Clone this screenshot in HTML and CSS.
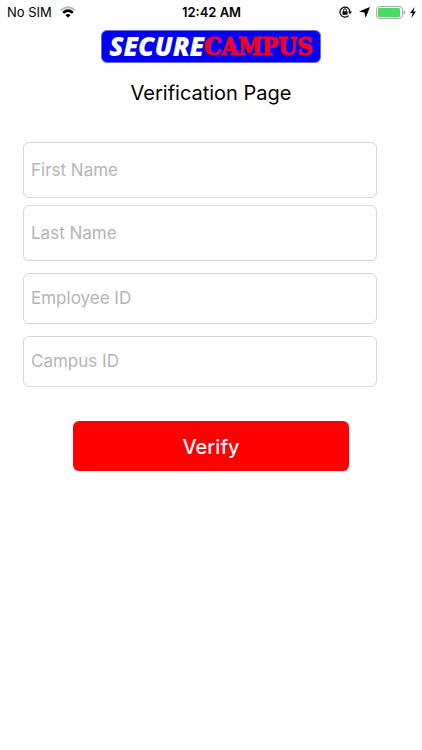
FILE: index.html
```html
<!DOCTYPE html>
<html lang="en">
<head>
<meta charset="utf-8">
<meta name="viewport" content="width=device-width, initial-scale=1">
<title>Verification Page</title>
<link rel="stylesheet" href="styles.css">
</head>
<body>
<div class="status">
  <div class="status-side">
    <span>No SIM</span>
    <svg class="wifi" width="16" height="12" viewBox="0 0 16 12" aria-hidden="true">
      <path d="M1 4.2Q8-1.8 15 4.2" fill="none" stroke="#b8b8b8" stroke-width="2"/>
      <path d="M3.2 6.8Q8 2.6 12.8 6.8" fill="none" stroke="#000" stroke-width="2.6"/>
      <path d="M5.4 9Q8 7 10.6 9L8 11.7Z"/>
    </svg>
  </div>
  <span class="time">12:42 AM</span>
  <div class="status-side status-right">
    <svg width="13" height="12" viewBox="0 0 13 12" aria-hidden="true">
      <path d="M9.6 9.6A5 5 0 1 1 11 6" fill="none" stroke="#000" stroke-width="1.2"/>
      <path d="M9 5.6h4L11 8.2Z"/>
      <rect x="3.5" y="5.2" width="5" height="3.6" rx=".4"/>
      <path d="M4.6 5.4V4.2a1.4 1.4 0 0 1 2.8 0v1.2" fill="none" stroke="#000" stroke-width="1"/>
    </svg>
    <svg class="arrow" width="11" height="11" viewBox="0 0 11 11" aria-hidden="true"><path d="M11 0 6.6 11 5.4 5.6 0 4.6Z"/></svg>
    <svg width="30" height="13" viewBox="0 0 30 13" aria-hidden="true">
      <rect x=".6" y=".6" width="25.8" height="11.8" rx="2.6" fill="#fff" stroke="#a0a0a0"/>
      <rect x="2" y="2" width="22" height="9" rx="1" fill="#4cd964"/>
      <path d="M27.6 4.5q1.6.4 1.6 2t-1.6 2Z" fill="#999"/>
    </svg>
    <svg width="6" height="11" viewBox="0 0 6 11" aria-hidden="true"><path d="M4.6 0 0 6h2.6L1.4 11 6 4.6H3.4Z"/></svg>
  </div>
</div>
<main class="page">
  <div class="logo"><span class="secure">SECURE</span><span class="campus">CAMPUS</span></div>
  <h1>Verification Page</h1>
  <form class="form">
    <input class="field tall" type="text" placeholder="First Name" aria-label="First Name">
    <input class="field tall" type="text" placeholder="Last Name" aria-label="Last Name">
    <input class="field" type="text" placeholder="Employee ID" aria-label="Employee ID">
    <input class="field" type="text" placeholder="Campus ID" aria-label="Campus ID">
    <button class="verify" type="submit">Verify</button>
  </form>
</main>
</body>
</html>
```

FILE: styles.css
```css
* { box-sizing: border-box; }
body {
  margin: 0;
  background: #fff;
  color: #000;
  font-family: Inter, "Liberation Sans", sans-serif;
}
.status {
  display: flex;
  align-items: center;
  height: 24px;
  padding: 0 6px 0 7px;
  font-size: 13px;
}
.status-side {
  display: flex;
  flex: 1;
  align-items: center;
  gap: 8px;
}
.status-right { justify-content: flex-end; gap: 4px; }
.arrow { margin: 0 2px 0 3px; }
.time { font-weight: 600; }
.page {
  display: flex;
  flex-direction: column;
  align-items: center;
  padding-top: 6px;
}
.logo {
  display: flex;
  align-items: center;
  justify-content: center;
  width: 220px;
  height: 33px;
  border: 1px solid #6a6ae8;
  border-radius: 6px;
  background: #0000f5;
}
.secure {
  color: #fff;
  font: italic 800 26px/31px "Open Sans", sans-serif;
}
.campus {
  color: #f40020;
  font: 700 24px/31px "DejaVu Serif Condensed", "DejaVu Serif", serif;
  -webkit-text-stroke: 1px #f40020;
}
h1 {
  margin: 16px 0 0;
  font-size: 20px;
  font-weight: 400;
  line-height: 28px;
}
.form {
  display: flex;
  flex-direction: column;
  align-self: stretch;
  margin: 35px 45px 0 23px;
}
.field {
  width: 100%;
  height: 51px;
  margin: 0 0 12px;
  padding: 0 7px 2px;
  border: 1px solid #d6d6d6;
  border-radius: 6px;
  background: #fff;
  color: #000;
  font: 400 17px/22px Inter, sans-serif;
}
.field::placeholder { color: #b4b4b4; opacity: 1; }
.tall { height: 56px; margin-bottom: 7px; padding-bottom: 0; }
.tall + .tall { margin-bottom: 12px; }
.verify {
  height: 50px;
  margin: 22px 28px 0 50px;
  padding: 2px 0 0;
  border: 0;
  border-radius: 6px;
  background: #f00;
  color: #fff;
  font: 500 20px/24px Inter, sans-serif;
}
```
